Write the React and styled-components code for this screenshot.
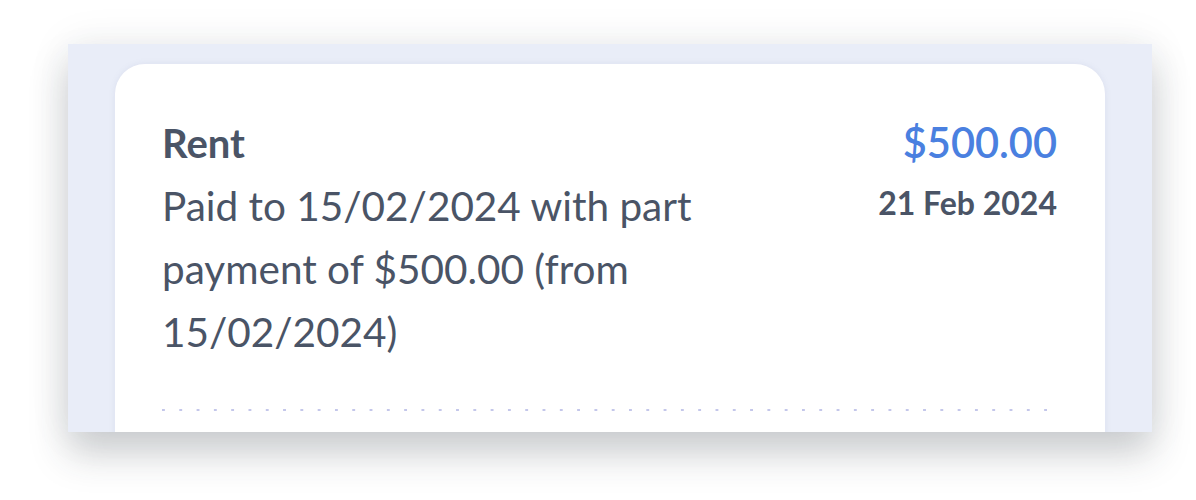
import React from "react";
import styled, { createGlobalStyle } from "styled-components";

const Global = createGlobalStyle`
  html, body {
    margin: 0;
    padding: 0;
    background: #ffffff;
    font-family: "Lato", "Noto Sans", sans-serif;
  }
`;

const Page = styled.div`
  width: 1196px;
  height: 500px;
  padding: 44px 44px 0 68px;
  box-sizing: border-box;
`;

const Panel = styled.div`
  width: 1084px;
  height: 388px;
  background: #e9edf8;
  box-shadow: 0 22px 36px rgba(40, 50, 60, 0.22), 0 0 40px rgba(40, 50, 60, 0.08);
  padding: 20px 47px 0;
  box-sizing: border-box;
  overflow: hidden;
`;

const Card = styled.div`
  background: #ffffff;
  border-radius: 30px 30px 0 0;
  box-shadow: 0 0 6px rgba(120, 130, 170, 0.12);
  padding: 56px 48px 0 47px;
  height: 420px;
  box-sizing: border-box;
`;

const Row = styled.div`
  display: flex;
  justify-content: space-between;
  align-items: flex-start;
  gap: 40px;
`;

const Left = styled.div`
  max-width: 580px;
`;

const Title = styled.div`
  font-size: 40px;
  font-weight: 700;
  color: #4a5466;
  line-height: 46px;
`;

const Description = styled.div`
  font-size: 40.5px;
  font-weight: 400;
  color: #4a5466;
  line-height: 63px;
  margin-top: 8px;
`;

const Right = styled.div`
  display: flex;
  flex-direction: column;
  align-items: flex-end;
  margin-top: -1px;
`;

const Amount = styled.div`
  font-size: 41.5px;
  font-weight: 600;
  color: #4a80e0;
  line-height: 46px;
`;

const DateText = styled.div`
  font-size: 32px;
  font-weight: 700;
  color: #4a5466;
  line-height: 40px;
  margin-top: 18px;
`;

const Divider = styled.div`
  margin-top: 46px;
  height: 2px;
  background-image: linear-gradient(to right, #c4c7ea 3px, transparent 3px);
  background-size: 17.3px 2px;
  background-repeat: repeat-x;
  margin-right: 8px;
`;

export default function App() {
  return (
    <>
      <Global />
      <Page>
        <Panel>
          <Card>
            <Row>
              <Left>
                <Title>Rent</Title>
                <Description>
                  Paid to 15/02/2024 with part payment of $500.00 (from
                  15/02/2024)
                </Description>
              </Left>
              <Right>
                <Amount>$500.00</Amount>
                <DateText>21 Feb 2024</DateText>
              </Right>
            </Row>
            <Divider />
          </Card>
        </Panel>
      </Page>
    </>
  );
}
